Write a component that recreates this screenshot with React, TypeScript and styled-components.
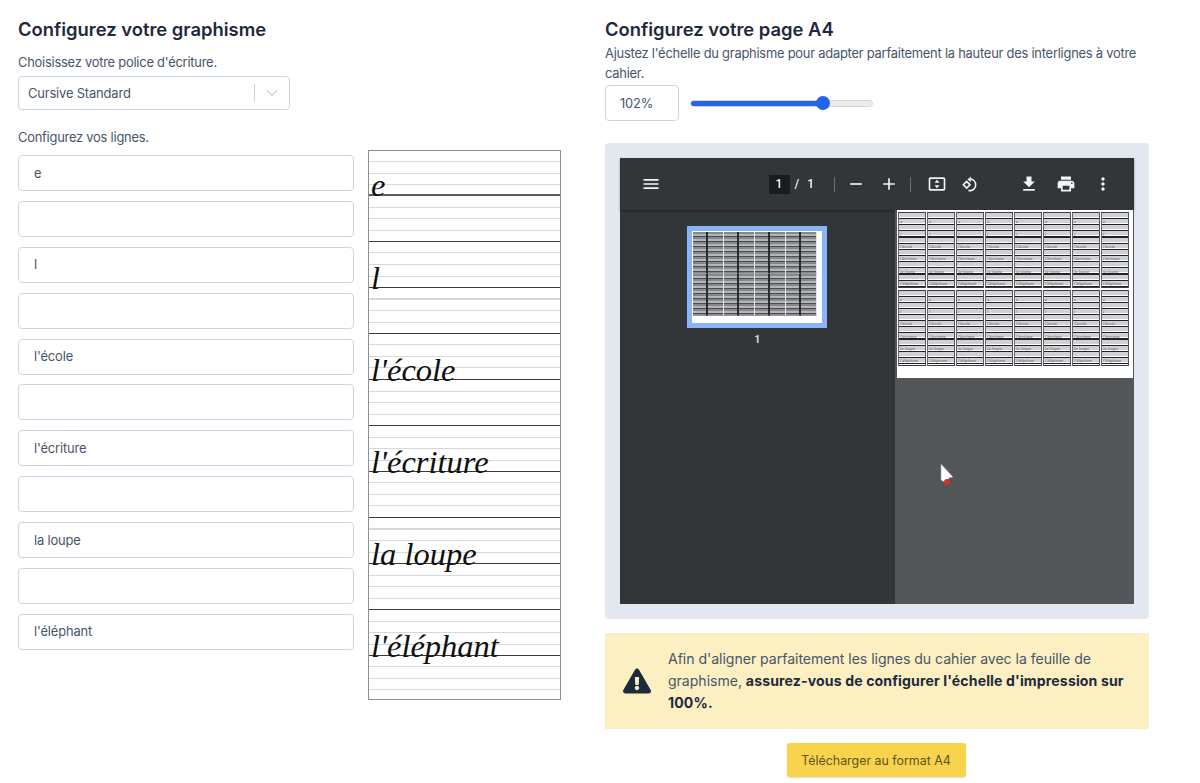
import React from 'react';
import styled, { createGlobalStyle } from 'styled-components';
import { ChevronDown } from 'lucide-react';
import { FaExclamationTriangle } from 'react-icons/fa';

const LINES = ['e', '', 'l', '', "l'école", '', "l'écriture", '', 'la loupe', '', "l'éléphant"];
const MINI_WORDS = ['e', 'l', "l'école", "l'écriture", 'la loupe', "l'éléphant"];
const SHEET_ROWS = [...LINES, ''];

const GlobalStyle = createGlobalStyle`
    html, body {
        margin: 0;
        padding: 0;
        background: #fff;
        font-family: Inter, "Noto Sans", sans-serif;
        color: #475569;
    }
    * {
        box-sizing: border-box;
    }
`;

const Page = styled.div`
    width: 1200px;
    height: 783px;
    overflow: hidden;
    display: grid;
    grid-template-columns: 543px 544px;
    column-gap: 44px;
    padding: 0 51px 0 18px;
`;

const Column = styled.section`
    display: flex;
    flex-direction: column;
    min-width: 0;
`;

const Heading = styled.h2`
    margin: 17px 0 0;
    font-size: 18.4px;
    line-height: 24px;
    font-weight: 600;
    color: #1e293b;
`;

const Label = styled.p<{ $top: number }>`
    margin: ${(p) => p.$top}px 0 0;
    font-size: 12.9px;
    line-height: 20px;
    letter-spacing: -0.23px;
    color: #475569;
`;

const SelectBox = styled.div`
    margin-top: 3px;
    width: 272px;
    height: 34px;
    display: flex;
    align-items: center;
    border: 1px solid #cbd5e1;
    border-radius: 4px;
    padding-left: 9px;
    font-size: 12.9px;
    letter-spacing: -0.15px;
    color: #475569;
`;

const SelectValue = styled.span`
    flex: 1;
`;

const SelectDivider = styled.span`
    width: 1px;
    height: 18px;
    background: #cbd5e1;
`;

const SelectArrow = styled.span`
    width: 34px;
    display: flex;
    justify-content: center;
    color: #cbd5e1;
`;

const Builder = styled.div`
    display: grid;
    grid-template-columns: 336px 193px;
    column-gap: 14px;
    margin-top: 2px;
`;

const Fields = styled.div`
    display: flex;
    flex-direction: column;
    gap: 9.9px;
    padding-top: 5px;
`;

const LineInput = styled.input`
    width: 100%;
    height: 36px;
    border: 1px solid #cbd5e1;
    border-radius: 4px;
    padding: 0 15px;
    font: inherit;
    font-size: 12.9px;
    letter-spacing: -0.15px;
    color: #475569;
    background: #fff;
    outline: none;
`;

const Sheet = styled.div`
    width: 193px;
    height: 550px;
    border: 1px solid #8f8f8f;
    overflow: hidden;
`;

const SheetRow = styled.div<{ $strong: boolean }>`
    height: 46px;
    padding-left: 2px;
    display: flex;
    align-items: flex-end;
    border-bottom: ${(p) => (p.$strong ? 2 : 1)}px solid ${(p) => (p.$strong ? '#5f5f5f' : '#3a3a3a')};
    background: repeating-linear-gradient(
        to bottom,
        transparent 0,
        transparent 10.5px,
        #d6d8e0 10.5px,
        #d6d8e0 11.5px
    );
    &:first-child {
        height: 45px;
    }
    &:last-child {
        border-bottom: none;
    }
`;

const Cursive = styled.span`
    font-family: 'Liberation Serif', serif;
    font-style: italic;
    font-size: 32.5px;
    line-height: 0;
    color: #111;
    transform: translateY(-9px);
    white-space: nowrap;
`;

const ScaleRow = styled.div`
    display: flex;
    align-items: center;
    gap: 12px;
    margin-top: 1px;
`;

const ScaleInput = styled.input`
    width: 74px;
    height: 36px;
    border: 1px solid #cbd5e1;
    border-radius: 4px;
    padding: 0 14px;
    font: inherit;
    font-size: 12.9px;
    letter-spacing: -0.15px;
    color: #475569;
    outline: none;
`;

const Slider = styled.input<{ $fill: number }>`
    -webkit-appearance: none;
    appearance: none;
    width: 183px;
    height: 7px;
    margin: 0 0 0 -1px;
    border-radius: 4px;
    border: 1px solid #d4d4d4;
    background: linear-gradient(
        to right,
        #2563eb ${(p) => p.$fill}%,
        #ececec ${(p) => p.$fill}%
    );
    &::-webkit-slider-thumb {
        -webkit-appearance: none;
        width: 14px;
        height: 14px;
        border-radius: 50%;
        background: #2563eb;
        border: none;
    }
`;

const ViewerFrame = styled.div`
    margin-top: 22px;
    height: 476px;
    padding: 15px;
    background: #e2e8f0;
    border-radius: 4px;
`;

const Viewer = styled.div`
    height: 446px;
    background: #323639;
    display: flex;
    flex-direction: column;
`;

const Toolbar = styled.div`
    height: 52px;
    flex-shrink: 0;
    display: grid;
    grid-template-columns: 1fr auto 1fr;
    align-items: center;
    padding: 0 19px;
    background: #323639;
    box-shadow: 0 1px 2px rgba(0, 0, 0, 0.4);
    position: relative;
    font-family: Roboto, sans-serif;
    color: #f1f3f4;
`;

const ToolGroup = styled.div<{ $end?: boolean; $gap?: number; $trail?: number }>`
    display: flex;
    align-items: center;
    gap: ${(p) => p.$gap ?? 9}px;
    padding-right: ${(p) => p.$trail ?? 0}px;
    justify-content: ${(p) => (p.$end ? 'flex-end' : 'flex-start')};
`;

const ToolIcon = styled.svg`
    width: 24px;
    height: 24px;
    padding: 2px;
    display: block;
    fill: #f1f3f4;
`;

const PageBox = styled.span`
    width: 21px;
    height: 19px;
    margin-right: -4px;
    background: #191b1c;
    font-size: 12px;
    font-weight: 500;
    display: flex;
    align-items: center;
    justify-content: center;
`;

const PageCount = styled.span`
    width: 30px;
    font-size: 12px;
    font-weight: 500;
    word-spacing: 5px;
`;

const ToolDivider = styled.span<{ $after?: number }>`
    width: 1px;
    height: 15px;
    margin-right: ${(p) => p.$after ?? 0}px;
    background: #6c7073;
`;

const ViewerBody = styled.div`
    flex: 1;
    display: grid;
    grid-template-columns: 275px 1fr;
    min-height: 0;
`;

const ThumbPane = styled.div`
    display: flex;
    flex-direction: column;
    align-items: center;
    padding-top: 16px;
`;

const ThumbBorder = styled.div`
    width: 140px;
    height: 102px;
    padding: 5px;
    background: #8ab4f8;
    margin-right: 2px;
`;

const ThumbPaper = styled.div`
    height: 92px;
    padding: 1px 2px 0 1px;
    background: #fff;
`;

const ThumbNumber = styled.span`
    margin-top: 5px;
    font-family: Roboto, sans-serif;
    font-size: 11px;
    font-weight: 500;
    color: #e8eaed;
`;

const MainPane = styled.div`
    background: #525659;
    padding: 0 1px 0 2px;
    position: relative;
`;

const MainPaper = styled.div`
    height: 168px;
    background: #fff;
    padding: 2px 1px 0;
`;

const MiniGrid = styled.div<{ $col: number; $row: number; $gap: number }>`
    display: grid;
    grid-template-columns: repeat(8, ${(p) => p.$col}px);
    grid-auto-rows: ${(p) => p.$row}px;
    gap: ${(p) => p.$gap}px;
`;

const MiniSheet = styled.div`
    border: 1px solid #3c3c3c;
    border-left-color: #666;
    border-right-color: #555;
    display: flex;
    flex-direction: column;
    overflow: hidden;
    background: #fff;
`;

const MiniRow = styled.div`
    flex: 1;
    display: flex;
    align-items: flex-end;
    padding-left: 1px;
    background: linear-gradient(
        to bottom,
        #cfd1d7 0,
        #cfd1d7 3.6px,
        #fff 3.6px,
        #fff 4.6px,
        #222 4.6px,
        #222 5.6px,
        #cfd1d7 5.6px,
        #cfd1d7 10.2px,
        #fff 10.2px,
        #fff 11.2px,
        #222 11.2px,
        #222 12.2px
    );
    font-family: 'Liberation Serif', serif;
    font-style: italic;
    font-size: 4.6px;
    line-height: 7px;
    color: #555;
    white-space: nowrap;
    overflow: hidden;
`;

const ThumbSheet = styled.div`
    border-right: 1px solid #e4e4e4;
    border-bottom: 1px solid #9a9a9a;
    background: repeating-linear-gradient(
        to bottom,
        #85888d 0,
        #85888d 2px,
        #b4b6ba 2px,
        #b4b6ba 4px,
        #4a4c4f 4px,
        #4a4c4f 5px
    );
    &:nth-child(odd) {
        border-right: 2px solid #2a2c2e;
    }
`;

const Pointer = styled.svg`
    position: absolute;
    left: 45px;
    top: 253px;
    width: 16px;
    height: 23px;
`;

const Alert = styled.div`
    margin-top: 14px;
    height: 96px;
    display: flex;
    align-items: center;
    gap: 17px;
    padding: 0 18px;
    background: #fcf0c3;
    font-size: 14.1px;
    line-height: 22px;
    letter-spacing: -0.04px;
    color: #475569;
    & > svg {
        flex-shrink: 0;
        color: #1e293b;
    }
    & strong {
        font-weight: 700;
        letter-spacing: 0.12px;
        color: #1e293b;
    }
`;

const ActionRow = styled.div`
    display: flex;
    justify-content: center;
    margin-top: 14px;
    padding-right: 2px;
`;

const DownloadButton = styled.button`
    width: 179px;
    height: 34px;
    border: none;
    border-radius: 3px;
    background: #f8d44c;
    box-shadow: 0 1px 2px rgba(0, 0, 0, 0.15);
    font: inherit;
    font-size: 12.4px;
    color: #5c5320;
`;

const Icon = ({ d }: { d: string }) => (
    <ToolIcon viewBox="0 0 24 24">
        <path d={d} />
    </ToolIcon>
);

const FitIcon = () => (
    <ToolIcon viewBox="0 0 24 24">
        <path d="M4 4h16c1.1 0 2 .9 2 2v12c0 1.1-.9 2-2 2H4c-1.1 0-2-.9-2-2V6c0-1.1.9-2 2-2zm0 2v12h16V6H4z" />
        <path d="M12 7l3 3.500H9L12 7zM12 17l-3-3.500h6L12 17z" />
    </ToolIcon>
);

const RotateIcon = () => (
    <ToolIcon viewBox="0 0 24 24">
        <path d="M8 7.600L13.400 13 8 18.400 2.600 13 8 7.600zm0 2.800L5.400 13 8 15.600l2.600-2.600L8 10.400z" />
        <path d="M13 3v2.100a8 8 0 0 1 0 15.800c-1.300.2-2.500 0-3.600-.4l1.200-1.700c.8.2 1.600.2 2.400.1a6 6 0 0 0 0-11.800V10L9 6.500 13 3z" />
    </ToolIcon>
);

const App = () => {
    const miniSheets = Array.from({ length: 16 });

    return (
        <>
            <GlobalStyle />
            <Page>
                <Column>
                    <Heading>Configurez votre graphisme</Heading>
                    <Label $top={12}>Choisissez votre police d'écriture.</Label>
                    <SelectBox>
                        <SelectValue>Cursive Standard</SelectValue>
                        <SelectDivider />
                        <SelectArrow>
                            <ChevronDown size={18} strokeWidth={2} />
                        </SelectArrow>
                    </SelectBox>
                    <Label $top={18}>Configurez vos lignes.</Label>
                    <Builder>
                        <Fields>
                            {LINES.map((line, i) => (
                                <LineInput key={i} readOnly value={line} />
                            ))}
                        </Fields>
                        <Sheet>
                            {SHEET_ROWS.map((line, i) => (
                                <SheetRow key={i} $strong={i === 0}>
                                    {line && <Cursive>{line}</Cursive>}
                                </SheetRow>
                            ))}
                        </Sheet>
                    </Builder>
                </Column>
                <Column>
                    <Heading>Configurez votre page A4</Heading>
                    <Label $top={3}>
                        Ajustez l'échelle du graphisme pour adapter parfaitement la hauteur des interlignes à votre
                        cahier.
                    </Label>
                    <ScaleRow>
                        <ScaleInput readOnly value="102%" />
                        <Slider type="range" readOnly min={30} max={126} value={102} $fill={73} />
                    </ScaleRow>
                    <ViewerFrame>
                        <Viewer>
                            <Toolbar>
                                <ToolGroup>
                                    <Icon d="M3 18h18v-2H3v2zm0-5h18v-2H3v2zm0-7v2h18V6H3z" />
                                </ToolGroup>
                                <ToolGroup $trail={4}>
                                    <PageBox>1</PageBox>
                                    <PageCount>/ 1</PageCount>
                                    <ToolDivider />
                                    <Icon d="M19 13H5v-2h14v2z" />
                                    <Icon d="M19 13h-6v6h-2v-6H5v-2h6V5h2v6h6v2z" />
                                    <ToolDivider $after={5} />
                                    <FitIcon />
                                    <RotateIcon />
                                </ToolGroup>
                                <ToolGroup $end $gap={13}>
                                    <Icon d="M19 9h-4V3H9v6H5l7 7 7-7zM5 18v2h14v-2H5z" />
                                    <Icon d="M19 8H5c-1.66 0-3 1.34-3 3v6h4v4h12v-4h4v-6c0-1.66-1.34-3-3-3zm-3 11H8v-5h8v5zm3-7c-.55 0-1-.45-1-1s.45-1 1-1 1 .45 1 1-.45 1-1 1zm-1-9H6v4h12V3z" />
                                    <Icon d="M12 8c1.1 0 2-.9 2-2s-.9-2-2-2-2 .9-2 2 .9 2 2 2zm0 2c-1.1 0-2 .9-2 2s.9 2 2 2 2-.9 2-2-.9-2-2-2zm0 6c-1.1 0-2 .9-2 2s.9 2 2 2 2-.9 2-2-.9-2-2-2z" />
                                </ToolGroup>
                            </Toolbar>
                            <ViewerBody>
                                <ThumbPane>
                                    <ThumbBorder>
                                        <ThumbPaper>
                                            <MiniGrid $col={15.5} $row={42} $gap={0}>
                                                {miniSheets.map((_, i) => (
                                                    <ThumbSheet key={i} />
                                                ))}
                                            </MiniGrid>
                                        </ThumbPaper>
                                    </ThumbBorder>
                                    <ThumbNumber>1</ThumbNumber>
                                </ThumbPane>
                                <MainPane>
                                    <MainPaper>
                                        <MiniGrid $col={27.5} $row={76} $gap={1.5}>
                                            {miniSheets.map((_, i) => (
                                                <MiniSheet key={i}>
                                                    {MINI_WORDS.map((word) => (
                                                        <MiniRow key={word}>{word}</MiniRow>
                                                    ))}
                                                </MiniSheet>
                                            ))}
                                        </MiniGrid>
                                    </MainPaper>
                                    <Pointer viewBox="0 0 16 23">
                                        <path d="M1 1l12 13-4 1-3 5-5-3z" fill="#fff" stroke="#9aa0a6" strokeWidth="0.6" />
                                        <circle cx="7" cy="19" r="3" fill="#d32f2f" />
                                    </Pointer>
                                </MainPane>
                            </ViewerBody>
                        </Viewer>
                    </ViewerFrame>
                    <Alert>
                        <FaExclamationTriangle size={28} />
                        <span>
                            Afin d'aligner parfaitement les lignes du cahier avec la feuille de graphisme,{' '}
                            <strong>assurez-vous de configurer l'échelle d'impression sur 100%.</strong>
                        </span>
                    </Alert>
                    <ActionRow>
                        <DownloadButton>Télécharger au format A4</DownloadButton>
                    </ActionRow>
                </Column>
            </Page>
        </>
    );
};

export default App;
